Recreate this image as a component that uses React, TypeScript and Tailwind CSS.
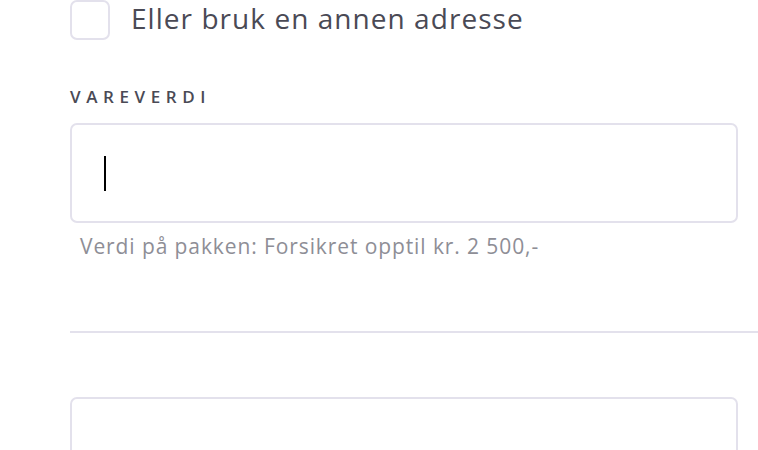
import { useState } from 'react';

const BORDER = 'border-[#e3e1ec]';

export default function App() {
  const [otherAddress, setOtherAddress] = useState(false);

  return (
    <div className="h-[450px] w-[758px] overflow-hidden bg-white pl-[70px] font-['Open_Sans','Lato',sans-serif] text-[#4a4a55]">
      {/* Alternate address checkbox */}
      <label className="flex h-10 cursor-pointer items-center gap-[21px]">
        <span
          className={`h-10 w-10 shrink-0 rounded-[7px] border-2 ${BORDER} bg-white`}
          onClick={() => setOtherAddress(!otherAddress)}
        />
        <span className="-mt-1 text-[28px] leading-none tracking-[1.05px]">Eller bruk en annen adresse</span>
      </label>

      {/* Goods value */}
      <div className="mt-[48px] mr-5">
        <div className="text-[17px] leading-none font-semibold tracking-[5.6px]">VAREVERDI</div>
        <div className={`mt-[18px] flex h-[100px] items-center rounded-[7px] border-2 ${BORDER} px-8`}>
          <span className="h-[35px] w-[2px] bg-black" />
        </div>
        <p className="mt-[13px] pl-[10px] text-[21px] leading-none tracking-[0.9px] text-[#8e8e96]">
          Verdi på pakken: Forsikret opptil kr. 2 500,-
        </p>
      </div>

      <div className="mt-[74px] h-[2px] bg-[#e3e1ec]" />

      <div className={`mt-[64px] mr-5 h-[99px] rounded-[7px] border-2 ${BORDER}`} />
    </div>
  );
}
